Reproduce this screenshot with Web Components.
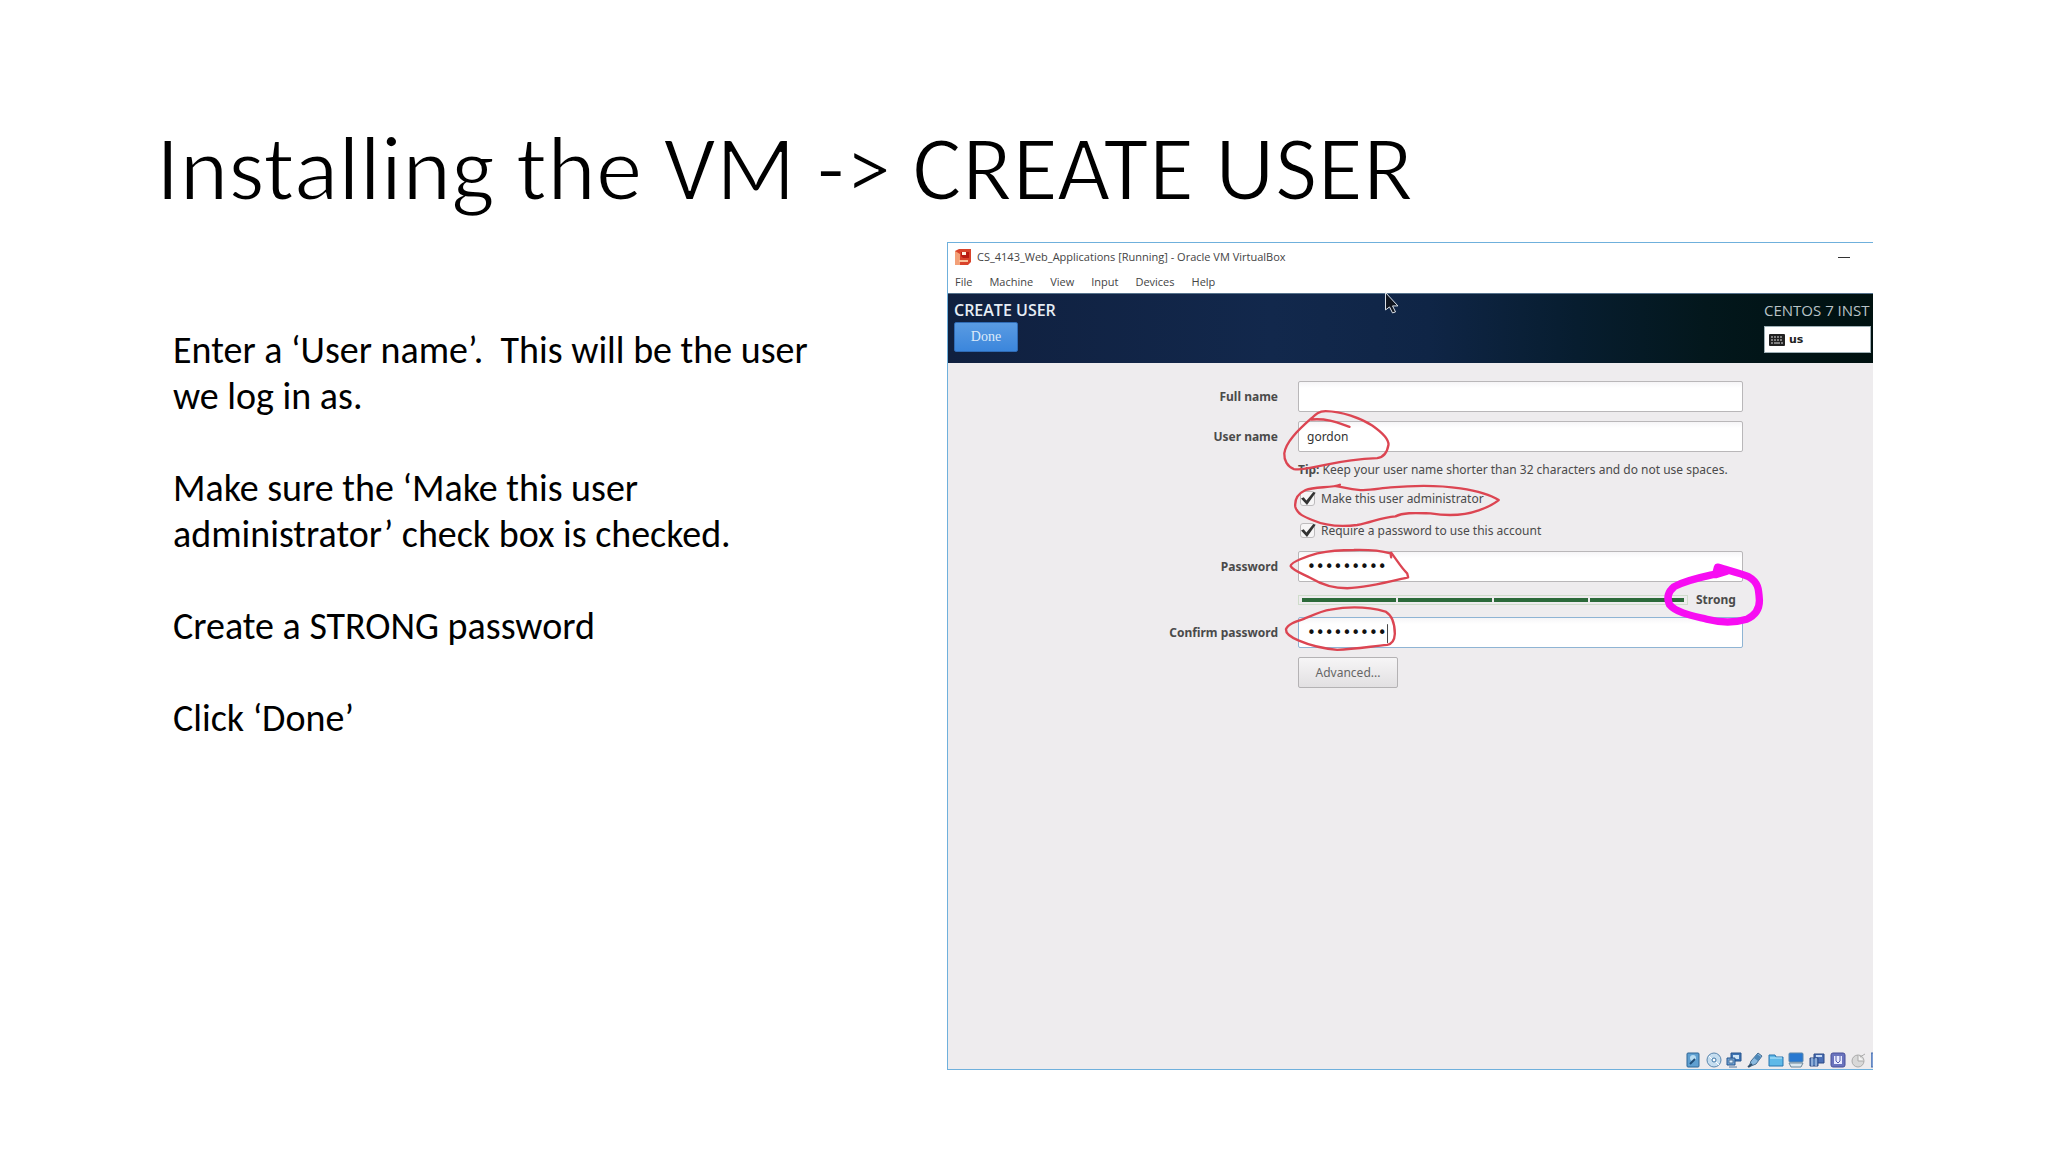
<!DOCTYPE html>
<html lang="en">
<head>
<meta charset="utf-8">
<title>Installing the VM</title>
<style>
body {
    margin: 0;
    background: #fff;
    color: #000;
    font-family: Carlito, Lato, sans-serif;
}
</style>
</head>
<body>
<slide-page>
    <span slot="title">Installing the VM -&gt; CREATE USER</span>
    <slide-notes>
        <p>Enter a ‘User name’.&nbsp; This will be the user we log in as.</p>
        <p>Make sure the ‘Make this user administrator’ check box is checked.</p>
        <p>Create a STRONG password</p>
        <p>Click ‘Done’</p>
    </slide-notes>
    <vm-window caption="CS_4143_Web_Applications [Running] - Oracle VM VirtualBox">
        <installer-header caption="CREATE USER" product="CENTOS 7 INST" layout="us"></installer-header>
        <user-form></user-form>
        <status-icons slot="status"></status-icons>
        <pen-marks slot="marks"></pen-marks>
    </vm-window>
</slide-page>

<script>
const define = (name, render) => {
    window.customElements.define(name, class extends HTMLElement {
        constructor () {
            super()
            this.root = this.attachShadow({ mode: 'open' })
        }
        connectedCallback () {
            this.root.innerHTML = render((key) => this.getAttribute(key) || '')
        }
    })
}

define('slide-page', () => `<style>
    :host {
        display: block;
        padding: 114px 175px 81px 156px;
    }
    h1 {
        margin: 0 0 20px;
        font-size: 93px;
        font-weight: 300;
        line-height: 108px;
        /* background-coloured outline thins the strokes to a light weight */
        -webkit-text-stroke: 2px #fff;
    }
    main {
        display: grid;
        grid-template-columns: 791fr 926fr;
        align-items: start;
    }
    </style>
    <h1><slot name="title"></slot></h1>
    <main><slot></slot></main>`)

define('slide-notes', () => `<style>
    :host {
        display: block;
        padding: 85px 110px 0 17px;
        font-size: 38px;
        line-height: 46px;
    }
    ::slotted(p) {
        margin: 0 0 46px;
    }
    </style>
    <slot></slot>`)

define('vm-window', (attr) => `<style>
    :host {
        display: flex;
        flex-direction: column;
        position: relative;
        min-height: 826px;
        border: solid #6fb0dc;
        border-width: 1px 0 1px 1px;
        background: #eeecee;
        color: #444;
        font: 11px/16px "Open Sans", sans-serif;
        overflow: hidden;
    }
    .caption {
        display: flex;
        align-items: center;
        gap: 6px;
        height: 28px;
        padding: 0 23px 0 7px;
        background: #fff;
    }
    .caption span {
        flex: 1;
    }
    .caption button {
        width: 12px;
        height: 12px;
        padding: 0;
        border: 0;
        background: linear-gradient(#333, #333) center / 12px 1px no-repeat;
    }
    nav {
        display: flex;
        align-items: center;
        gap: 17px;
        height: 22px;
        padding-left: 7px;
        background: #fff;
    }
    nav a {
        color: inherit;
        text-decoration: none;
    }
    .body {
        flex: 1;
    }
    </style>
    <div class="caption">
        <svg width="16" height="16" viewBox="0 0 16 16">
            <path d="M0 2 4 0h12v13l-3 3H0z" fill="#d9432b"/>
            <path d="M0 2 5 5v11H0z" fill="#f3a078"/>
            <path d="M6 3h8v6H8L6 7z" fill="#b91b12"/>
            <path d="M7 3h4v3H7z" fill="#fff0e0"/>
            <path d="M4 12h9" stroke="#f9c09a" stroke-width="2"/>
        </svg>
        <span>${attr('caption')}</span>
        <button aria-label="Minimize"></button>
    </div>
    <nav>${['File', 'Machine', 'View', 'Input', 'Devices', 'Help'].map((item) => `<a href="#">${item}</a>`).join('')}</nav>
    <div class="body"><slot></slot></div>
    <slot name="status"></slot>
    <slot name="marks"></slot>`)

define('installer-header', (attr) => `<style>
    :host {
        display: flex;
        justify-content: space-between;
        height: 70px;
        box-sizing: border-box;
        padding: 7px 0 0 6px;
        border-top: 1px solid #56728c;
        background: linear-gradient(90deg, #10203f, #12284c 35%, #0f2546 52%, #071d2f 68%, #03171c 82%, #001110);
        color: #e6edf5;
        font-size: 16px;
        line-height: 18px;
    }
    strong {
        display: block;
        font-weight: 600;
    }
    .done {
        display: block;
        width: 64px;
        height: 30px;
        margin-top: 3px;
        padding: 0;
        border: 1px solid #2f6bb5;
        border-radius: 2px;
        background: linear-gradient(#5a9be2, #3b86dc);
        color: #dceafa;
        font: 14px/18px "Liberation Serif", serif;
    }
    .side {
        width: 109px;
        white-space: nowrap;
        color: #b8c2c6;
        font-size: 15px;
    }
    .layout {
        display: flex;
        align-items: center;
        gap: 4px;
        width: 107px;
        height: 27px;
        margin-top: 7px;
        padding: 0 4px;
        border: 1px solid #9fb0b6;
        background: #fff;
        color: #222;
        font: bold 11px/14px "DejaVu Sans", sans-serif;
    }
    </style>
    <div>
        <strong>${attr('caption')}</strong>
        <button class="done">Done</button>
    </div>
    <div class="side">
        ${attr('product')}
        <button class="layout">
            <svg width="16" height="12" viewBox="0 0 16 12">
                <rect width="16" height="12" rx="1" fill="#222"/>
                <path d="M2 3h12M2 6h12" stroke="#ddd" stroke-width="1" stroke-dasharray="2 1"/>
                <path d="M2 9h2m1 0h6m1 0h2" stroke="#ddd"/>
            </svg>
            ${attr('layout')}
        </button>
    </div>`)

// One label / control pair. The label column is kept empty when there is no label.
define('field-row', (attr) => `<style>
    :host {
        display: grid;
        grid-template-columns: 330fr minmax(0, 445fr) 110fr;
        column-gap: 20px;
        align-items: center;
    }
    label {
        text-align: right;
        font-weight: bold;
    }
    input {
        width: 100%;
        height: 31px;
        box-sizing: border-box;
        padding: 0 8px;
        border: 1px solid #b9b7b9;
        border-radius: 2px;
        outline: 0;
        background: linear-gradient(#f6f5f7, #fff 6px);
        color: #333;
        font: inherit;
    }
    input[type=password] {
        color: #111;
        font: 15px "DejaVu Sans", sans-serif;
    }
    :host([active]) input {
        border-color: #8fb4d4;
    }
    .control {
        grid-column: 2;
    }
    </style>
    ${attr('label') ? `<label for="field">${attr('label')}</label>
    <input id="field" type="${attr('type') || 'text'}" value="${attr('value')}">` : '<div class="control"><slot></slot></div>'}`)

define('check-option', () => `<style>
    :host {
        display: block;
    }
    label {
        display: flex;
        align-items: center;
        gap: 6px;
        height: 23px;
    }
    input {
        appearance: none;
        width: 15px;
        height: 15px;
        margin: 0 0 0 2px;
        border: 1px solid #bdbbbd;
        border-radius: 3px;
        background: #f6f5f6;
        display: grid;
    }
    input:checked::before {
        content: "";
        width: 15px;
        height: 13px;
        background: #333;
        clip-path: polygon(0 50%, 18% 40%, 36% 65%, 82% 0, 98% 6%, 40% 100%);
    }
    </style>
    <label><input type="checkbox" checked><slot></slot></label>`)

define('strength-meter', () => `<style>
    :host {
        display: flex;
        align-items: center;
        gap: 8px;
        height: 17px;
    }
    .bar {
        flex: 1;
        display: grid;
        grid-template-columns: repeat(4, 1fr);
        gap: 2px;
        padding: 2px 3px;
        border: 1px solid #cfdccb;
    }
    i {
        height: 4px;
        background: #2c6a3a;
    }
    span {
        width: 47px;
        font-weight: bold;
    }
    </style>
    <div class="bar"><i></i><i></i><i></i><i></i></div>
    <span><slot></slot></span>`)

define('user-form', () => `<style>
    :host {
        display: flex;
        flex-direction: column;
        gap: 9px;
        padding-top: 18px;
        color: #4a4a4a;
        font: 12px/17px "Noto Sans", sans-serif;
    }
    .tip {
        white-space: nowrap;
    }
    .advanced {
        display: block;
        width: 100px;
        height: 31px;
        padding: 0;
        border: 1px solid #b4b2b4;
        border-radius: 2px;
        background: linear-gradient(#f6f5f6, #e2e0e2);
        color: #666;
        font: inherit;
    }
    </style>
    <field-row label="Full name"></field-row>
    <field-row label="User name" value="gordon"></field-row>
    <field-row><div class="tip"><b>Tip:</b> Keep your user name shorter than 32 characters and do not use spaces.</div></field-row>
    <field-row><check-option>Make this user administrator</check-option></field-row>
    <field-row><check-option>Require a password to use this account</check-option></field-row>
    <field-row label="Password" type="password" value="centosvm7"></field-row>
    <field-row><strength-meter>Strong</strength-meter></field-row>
    <field-row label="Confirm password" type="password" value="centosvm7" active></field-row>
    <field-row><button class="advanced">Advanced...</button></field-row>`)

define('status-icons', () => {
    const icons = [
        // hard disk
        '<rect x="2" y="1" width="12" height="14" rx="1" fill="#5f9fd0" stroke="#2f6796"/><circle cx="8" cy="6" r="3" fill="#b7dcf2"/><path d="m5 12 5-5" stroke="#1f4d78" stroke-width="2"/>',
        // optical disk
        '<circle cx="8" cy="8" r="7" fill="#c5ddef" stroke="#5a86ad"/><circle cx="8" cy="8" r="2" fill="#fff" stroke="#3c74a5"/><path d="m3 4 3 3m4 3 3 3" stroke="#fff"/>',
        // network
        '<path d="M5 1h10v8H5z" fill="#3e75b5" stroke="#27548c"/><path d="M7 3h6v4H7z" fill="#cde4f5"/><path d="M1 6h8v7H1z" fill="#6ea1d3" stroke="#27548c"/><path d="M3 8h4v3H3zM3 15h8" fill="#e0f0fb" stroke="#55779c"/>',
        // usb
        '<path d="m2 15 2-6 7-8 4 3-6 8-5 2z" fill="#8ab9df" stroke="#486e91"/><path d="m10 2 4 3-3 4-4-3z" fill="#4d87b7"/><path d="m1 15 4-3" stroke="#334f69" stroke-width="2"/>',
        // shared folders
        '<path d="M1 3h6l1 2h7v9H1z" fill="#5fb9e8" stroke="#2874ae"/><path d="M2 6h12" stroke="#c2ebff"/>',
        // display
        '<rect x="1" y="1" width="14" height="9" rx="1" fill="#2878d0" stroke="#5b87ad"/><path d="M1 11h14l-2 4H3z" fill="#dce8ef" stroke="#6b8699"/>',
        // recording
        '<path d="M5 2h10v9H5z" fill="#4b6fb6" stroke="#2c4b85"/><path d="M7 4h6" stroke="#c7dbf5" stroke-width="2"/><path d="M1 6h8v8H1z" fill="#557fb9" stroke="#2c4b85"/><path d="M3 6v8m4-8v8" stroke="#c7dbf5"/>',
        // virtualization
        '<rect x="1" y="1" width="14" height="14" rx="2" fill="#6a73bd" stroke="#49509a"/><rect x="4" y="4" width="8" height="8" fill="#e9ebff"/><path d="M6 4v5l2 2 2-2V4" fill="none" stroke="#5660ae"/>',
        // mouse
        '<circle cx="8" cy="9" r="6" fill="#d8d8d8" stroke="#ababab"/><path d="M8 3v6h6" fill="#f4f4f4" stroke="#aaa"/><path d="m10 5 5-3" stroke="#aaa"/>',
        // host key
        '<rect x="0" y="1" width="15" height="14" fill="#7f9fd4" stroke="#4a70b0"/>',
    ]
    return `<style>
    :host {
        display: flex;
        justify-content: space-between;
        align-self: flex-end;
        width: 202px;
        margin-right: -14px;
        padding-bottom: 1px;
    }
    svg {
        flex: none;
        width: 16px;
        height: 16px;
    }
    </style>
    ${icons.map((icon) => `<svg viewBox="0 0 16 16">${icon}</svg>`).join('')}`
})

// Freehand marks and the mouse pointer, drawn on top of the window.
define('pen-marks', () => `<style>
    :host {
        position: absolute;
        inset: 0;
        pointer-events: none;
    }
    svg {
        display: block;
        width: 100%;
    }
    path {
        fill: none;
        stroke-linecap: round;
        stroke-linejoin: round;
    }
    .pen {
        stroke: #dc4552;
        stroke-width: 7;
    }
    .marker {
        stroke: #f70df2;
        stroke-width: 22;
    }
    </style>
    <svg viewBox="947 242 926 829">
        <g class="pen" transform="translate(1150 370) scale(.3333)">
            <path d="M597 168C560 155 530 142 482 146M482 143C495 130 505 121 525 121C575 122 630 142 665 164C695 185 715 205 714 222C710 245 700 260 680 262C620 264 570 272 520 283C480 291 455 300 430 295C410 288 400 268 401 248C405 215 440 180 482 143"/>
            <path d="M568 342C545 352 490 347 465 358C440 370 432 390 434 408C440 430 460 438 485 448C530 468 580 468 620 463C665 455 690 440 735 437C760 424 800 427 840 428C890 436 940 435 985 419C1010 410 1030 400 1045 388C1020 372 975 360 930 353C870 344 790 344 720 350C690 352 660 360 630 358C595 355 580 350 556 346"/>
        </g>
        <g class="pen" transform="translate(1150 540) scale(.3333)">
            <path d="M722 50L720 38C690 30 650 27 610 28C570 28 530 32 500 38C470 46 420 65 420 76C425 88 450 97 480 112C510 130 545 143 590 143C650 141 710 125 773 110L770 98C755 85 740 60 722 36"/>
            <path d="M540 207C580 200 640 195 705 213C725 225 733 250 733 280C732 300 725 310 710 313C660 318 610 326 560 328C520 324 480 315 445 300C420 290 405 278 406 266C412 250 435 243 460 235C490 222 515 210 540 207"/>
        </g>
        <g class="marker" transform="translate(1480 540) scale(.3333)">
            <path d="M712 80L706 102L740 92C690 106 630 112 582 138C562 155 560 175 568 192C590 218 640 226 680 236C720 246 760 248 800 236C825 225 838 205 838 180C836 145 835 125 805 108C780 98 740 88 715 80"/>
        </g>
        <path d="M1387 624v18" stroke="#444"/>
        <path d="M1385 292v17l4-3 3 6 3-1-3-6h5z" style="fill: #10151f" stroke="#dfe4ea"/>
    </svg>`)
</script>
</body>
</html>
